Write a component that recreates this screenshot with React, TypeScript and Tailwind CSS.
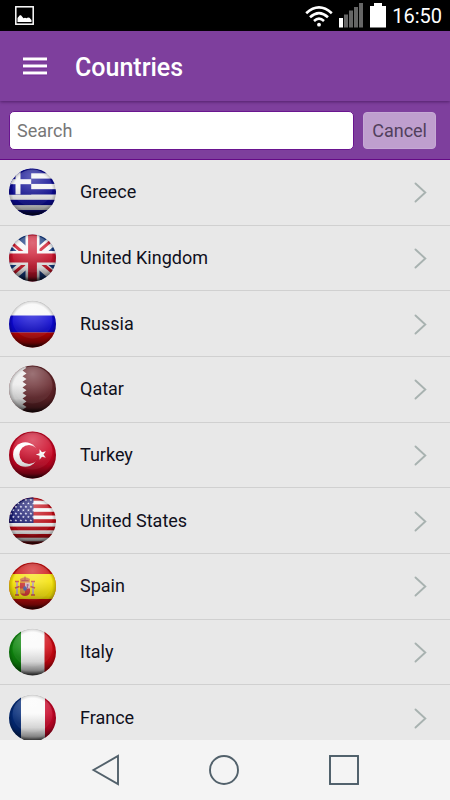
import React, { useState } from "react";

type TCountry = {
    code: string;
    name: string;
    flag: React.ReactNode;
};

const starPoints = (cx: number, cy: number, r: number, turn = -90) => {
    return Array.from({ length: 10 }, (_, i) => {
        const angle = ((turn + i * 36) * Math.PI) / 180;
        const radius = i % 2 ? r * 0.4 : r;
        return `${(cx + radius * Math.cos(angle)).toFixed(2)},${(cy + radius * Math.sin(angle)).toFixed(2)}`;
    }).join(" ");
}

const GreeceFlag = () => (
    <>
        <rect width="48" height="48" fill="#f4f4f4" />
        {[0, 10.6, 21.2, 31.8, 42.2].map((y) => (
            <rect key={y} y={y} width="48" height="5.3" fill="#0b0a92" />
        ))}
        <rect width="22.7" height="26.5" fill="#0b0a92" />
        <rect x="7" width="5" height="26.5" fill="#f4f4f4" />
        <rect y="11.2" width="22.7" height="5" fill="#f4f4f4" />
        <rect y="42.2" width="48" height="6" fill="#0b0a92" />
    </>
);

const UnitedKingdomFlag = () => (
    <>
        <rect width="48" height="48" fill="#143a80" />
        <path d="M-4 0L52 48M52 0L-4 48" stroke="#f6f6f6" strokeWidth="10" />
        <path d="M-4 3L22 25M52 -1L26 21M26 23L52 45M22 25L-4 47" stroke="#cc1426" strokeWidth="3" />
        <path d="M24 0V48M0 24H48" stroke="#f6f6f6" strokeWidth="14" />
        <path d="M24 0V48M0 24H48" stroke="#cb142c" strokeWidth="8.8" />
    </>
);

const RussiaFlag = () => (
    <>
        <rect width="48" height="16" fill="#f7f7f7" />
        <rect y="15.5" width="48" height="17" fill="#0b06d2" />
        <rect y="32.5" width="48" height="15.5" fill="#c80404" />
    </>
);

const QatarFlag = () => (
    <>
        <rect width="48" height="48" fill="#642429" />
        <path
            d="M0 0H14L18 2.8L14 5.6L18 8.4L14 11.2L18 14L14 16.8L18 19.6L14 22.4L18 25.2L14 28L18 30.8L14 33.6L18 36.4L14 39.2L18 42L14 44.8L18 48H0Z"
            fill="#ececec"
        />
    </>
);

const TurkeyFlag = () => (
    <>
        <rect width="48" height="48" fill="#cb0422" />
        <circle cx="16.8" cy="23.5" r="12.2" fill="#fff" />
        <circle cx="20.5" cy="23.5" r="9.6" fill="#cb0422" />
        <polygon points={starPoints(32.8, 23.5, 5.6, 180)} fill="#fff" />
    </>
);

const UnitedStatesFlag = () => (
    <>
        <rect width="48" height="48" fill="#f6f6f6" />
        {[0, 7.4, 14.8, 22.2, 29.6, 37, 44.4].map((y) => (
            <rect key={y} y={y} width="48" height="3.7" fill="#bf0812" />
        ))}
        <rect width="25" height="26" fill="#15176e" />
        {[0, 1, 2, 3, 4, 5, 6].map((row) => (
            [0, 1, 2, 3, 4].map((col) => (
                <polygon
                    key={`${row}-${col}`}
                    points={starPoints(2.4 + col * 5 + (row % 2) * 2.5, 3 + row * 3.4, 1.5)}
                    fill="#e8e8f8"
                />
            ))
        ))}
    </>
);

const SpainFlag = () => (
    <>
        <rect width="48" height="48" fill="#cc0c0c" />
        <rect y="12" width="48" height="25" fill="#f5e206" />
        <rect x="7.5" y="20" width="2" height="13" fill="#b9a2a0" />
        <rect x="23.5" y="20" width="2" height="13" fill="#b9a2a0" />
        <path d="M6.5 19.5H10.5M6.5 33H10.5M22.5 19.5H26.5M22.5 33H26.5M6.5 26L11 24.5M26.5 26L22 24.5" stroke="#c4473a" strokeWidth="1.7" />
        <path d="M12 20L11.5 17Q16.5 13.5 21.5 17L21 20Z" fill="#c96b32" />
        <path d="M16.5 14.5V18M13 18.5H20" stroke="#a73434" strokeWidth="1" />
        <path d="M11.5 20.5H21.5V30Q20.5 34 16.5 34Q12.5 34 11.5 30Z" fill="#c92a2a" />
        <rect x="16.5" y="20.5" width="5" height="6" fill="#d9b5b5" />
        <rect x="11.5" y="26.5" width="5" height="5" fill="#d68a2c" />
        <path d="M18 23H20.5M19 22V26" stroke="#9a4b8c" strokeWidth="1" />
        <ellipse cx="16.5" cy="26.5" rx="1.8" ry="2.2" fill="#4257a8" />
    </>
);

const ItalyFlag = () => (
    <>
        <rect width="48" height="48" fill="#fafafa" />
        <rect width="12.5" height="48" fill="#0d860c" />
        <rect x="36" width="12" height="48" fill="#cf0610" />
    </>
);

const FranceFlag = () => (
    <>
        <rect width="48" height="48" fill="#fafafa" />
        <rect width="12.5" height="48" fill="#022a78" />
        <rect x="36.5" width="12" height="48" fill="#c70426" />
    </>
);

const countries: TCountry[] = [
    { code: "gr", name: "Greece", flag: <GreeceFlag /> },
    { code: "gb", name: "United Kingdom", flag: <UnitedKingdomFlag /> },
    { code: "ru", name: "Russia", flag: <RussiaFlag /> },
    { code: "qa", name: "Qatar", flag: <QatarFlag /> },
    { code: "tr", name: "Turkey", flag: <TurkeyFlag /> },
    { code: "us", name: "United States", flag: <UnitedStatesFlag /> },
    { code: "es", name: "Spain", flag: <SpainFlag /> },
    { code: "it", name: "Italy", flag: <ItalyFlag /> },
    { code: "fr", name: "France", flag: <FranceFlag /> },
];

// Shared gradients and clip for the glossy flag buttons
const FlagDefs = () => (
    <svg className="absolute size-0" aria-hidden="true">
        <defs>
            <clipPath id="ball">
                <circle cx="24" cy="24" r="23.5" />
            </clipPath>
            <linearGradient id="shade" x1="0" y1="0" x2="0" y2="1">
                <stop offset="0.4" stopColor="#000" stopOpacity="0" />
                <stop offset="0.7" stopColor="#000" stopOpacity="0.16" />
                <stop offset="0.88" stopColor="#000" stopOpacity="0.46" />
                <stop offset="1" stopColor="#000" stopOpacity="0.9" />
            </linearGradient>
            <radialGradient id="rim">
                <stop offset="0.84" stopColor="#000" stopOpacity="0" />
                <stop offset="1" stopColor="#000" stopOpacity="0.22" />
            </radialGradient>
            <radialGradient id="gloss" cx="0.5" cy="0.2" r="0.65">
                <stop offset="0" stopColor="#fff" stopOpacity="0.36" />
                <stop offset="1" stopColor="#fff" stopOpacity="0.06" />
            </radialGradient>
        </defs>
    </svg>
);

const FlagBall = ({ children }: { children: React.ReactNode }) => (
    <svg viewBox="-0.5 0 48 48" className="size-12 shrink-0" aria-hidden="true">
        <g clipPath="url(#ball)">
            {children}
            <rect width="48" height="48" fill="url(#shade)" />
            <circle cx="24" cy="24" r="23.5" fill="url(#rim)" />
            <ellipse cx="24" cy="20" rx="20" ry="18.5" fill="url(#gloss)" />
        </g>
    </svg>
);

const StatusBar = () => (
    <div className="flex h-[31px] shrink-0 items-center justify-between bg-black pr-2 pl-[15px] text-white">
        <svg viewBox="0 0 19 19" className="size-[19px]" aria-hidden="true">
            <rect x="0.8" y="0.8" width="17.4" height="17.4" fill="none" stroke="#fff" strokeWidth="1.5" />
            <path d="M2.5 16V12L4.8 9.3H6L8.5 12.2L10 11.7L11.5 12.2L13 11.4L14.5 11.8L16.5 14V16Z" fill="#fff" />
        </svg>
        <div className="flex items-center">
            <svg viewBox="0 0 28 22" className="mr-1.5 h-[22px] w-7" aria-hidden="true">
                <g fill="none" stroke="#fff" strokeWidth="2.6">
                    <path d="M1.2 8.2Q14 -3.6 26.8 8.2" />
                    <path d="M5 12.2Q14 4 23 12.2" />
                    <path d="M9 16Q14 11.4 19 16" />
                </g>
                <circle cx="14" cy="19.7" r="1.9" fill="#fff" />
            </svg>
            <svg viewBox="0 0 25 25" className="mr-1.5 size-[25px]" aria-hidden="true">
                <rect x="0" y="15" width="4" height="9.5" fill="#fff" />
                <path d="M5 11.5H9V24.5H5ZM10 7.5H14V24.5H10ZM15 4H19V24.5H15ZM20 0H24V24.5H20Z" fill="#666" />
            </svg>
            <svg viewBox="0 0 16 25" className="mr-1.5 h-[25px] w-4" aria-hidden="true">
                <path d="M4 0H12V3H16V24.5H0V3H4Z" fill="#fff" />
            </svg>
            <span className="text-xl leading-6">16:50</span>
        </div>
    </div>
);

const Header = () => (
    <header className="z-10 flex h-[70px] shrink-0 items-center bg-[#7e3f9d] pl-[22px] text-white shadow-[0_1px_3px_rgba(40,0,60,0.5)]">
        <button type="button" aria-label="Menu">
            <svg viewBox="0 0 25 19" className="h-[19px] w-[25px]" aria-hidden="true">
                <path d="M1 2.6H25M1 9.6H25M1 16.6H25" stroke="#6a1590" strokeWidth="3.4" />
                <path d="M1 2H25M1 9H25M1 16H25" stroke="#fff" strokeWidth="2.8" />
            </svg>
        </button>
        <h1 className="ml-7 pt-1 text-[25px] leading-8 font-medium">Countries</h1>
    </header>
);

const NavigationBar = () => (
    <nav className="flex h-[60px] shrink-0 items-center justify-around bg-[#f4f4f4] px-[46px]">
        <button type="button" aria-label="Back">
            <svg viewBox="0 0 30 32" className="h-8 w-[30px]" aria-hidden="true">
                <path d="M28 2V30L3.5 16Z" fill="none" stroke="#52616b" strokeWidth="1.9" />
            </svg>
        </button>
        <button type="button" aria-label="Home">
            <svg viewBox="0 0 32 32" className="size-8" aria-hidden="true">
                <circle cx="16" cy="16" r="14" fill="none" stroke="#52616b" strokeWidth="1.9" />
            </svg>
        </button>
        <button type="button" aria-label="Recent apps">
            <svg viewBox="0 0 32 32" className="size-8" aria-hidden="true">
                <rect x="2" y="2" width="28" height="28" fill="none" stroke="#4a5b66" strokeWidth="1.9" />
            </svg>
        </button>
    </nav>
);

const App = () => {
    const [search, setSearch] = useState<string>("");
    const filtered = countries.filter(({ name }) => name.toLowerCase().includes(search.toLowerCase()));

    return (
        <div className="flex h-screen flex-col bg-[#e8e8e8] font-[Roboto,sans-serif]">
            <FlagDefs />
            <StatusBar />
            <Header />

            <form
                className="flex shrink-0 gap-[9px] border-b border-[#650a86] bg-[#7e3f9d] pt-[10px] pr-3.5 pb-[9px] pl-[9px]"
                onSubmit={(event) => event.preventDefault()}
            >
                <input
                    type="text"
                    aria-label="Search"
                    placeholder="Search"
                    value={search}
                    onChange={(event) => setSearch(event.target.value)}
                    className="h-[39px] min-w-0 flex-1 rounded-[5px] border border-[#6a1590] bg-white px-[7px] text-lg text-[#111] outline-none placeholder:text-[#777]"
                />
                <button
                    type="button"
                    onClick={() => setSearch("")}
                    className="my-px rounded-[4px] border border-[#c6a9d5] bg-[#bf9fce] px-2 text-lg text-[#51405c]"
                >
                    Cancel
                </button>
            </form>

            <main className="min-h-0 flex-1 overflow-y-auto [scrollbar-width:none]">
                <ul className={filtered.length === countries.length ? "grid min-h-[591px] auto-rows-fr" : "grid"}>
                    {filtered.map(({ code, name, flag }) => (
                        <li key={code} className="border-b border-[#d0d0d0]">
                            <a href={`#${code}`} className="flex h-full min-h-16 items-center pr-[23px] pl-2">
                                <FlagBall>{flag}</FlagBall>
                                <span className="ml-6 flex-1 text-lg leading-6 text-[#10101c]">{name}</span>
                                <svg viewBox="0 0 14 22" className="h-[22px] w-3.5" aria-hidden="true">
                                    <path d="M2.5 2.5L12.3 11.5L2.5 20.5" fill="none" stroke="#a8b2b0" strokeWidth="1.9" strokeLinecap="round" />
                                </svg>
                            </a>
                        </li>
                    ))}
                </ul>
            </main>

            <NavigationBar />
        </div>
    );
}

export default App;
